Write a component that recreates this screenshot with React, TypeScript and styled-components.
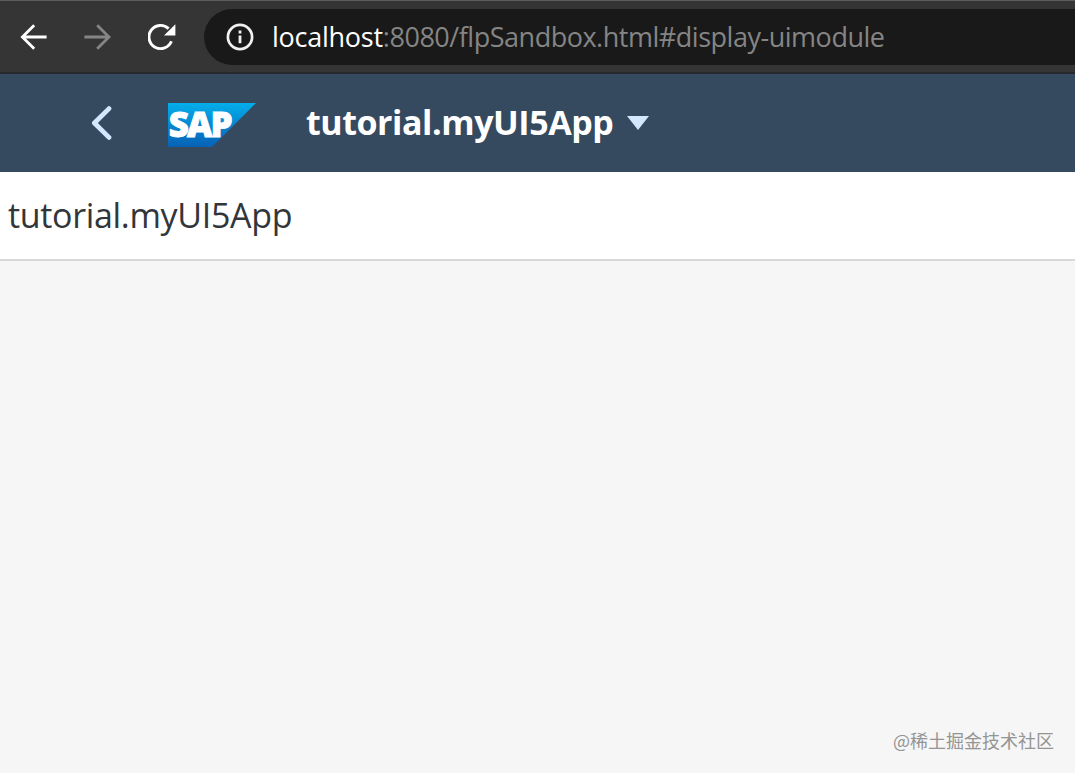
import React from "react";
import styled, { createGlobalStyle } from "styled-components";

const GlobalStyle = createGlobalStyle`
  body {
    margin: 0;
    background-color: #f6f6f6;
    overflow: hidden;
  }
`;

const App: React.FC = () => {
  return (
    <>
      <GlobalStyle />
      <Screen>
        <BrowserBar>
          <NavIcons>
            <svg width="28" height="28" viewBox="0 0 28 28" fill="none" stroke="#fff" strokeWidth="2.8">
              <path d="M26.6 14H3M14.2 2.2L2.4 14l11.8 11.8" />
            </svg>
            <svg width="28" height="28" viewBox="0 0 28 28" fill="none" stroke="#858585" strokeWidth="2.8">
              <path d="M0.4 14h24M13.2 2.2L25 14 13.2 25.8" />
            </svg>
            <svg width="28" height="28" viewBox="0 0 28 28" fill="none">
              <path d="M23.4 18.2A11.6 11.6 0 1 1 20.6 5.6" stroke="#fff" strokeWidth="2.9" />
              <path d="M27.4 1.2v11.2H16z" fill="#fff" />
            </svg>
          </NavIcons>
          <AddressBar>
            <svg width="28" height="28" viewBox="0 0 28 28" fill="none">
              <circle cx="14" cy="14" r="12.1" stroke="#f1f1f1" strokeWidth="2.7" />
              <path d="M12.6 12.6h2.8v7.6h-2.8zM12.6 7.6h2.8v2.8h-2.8z" fill="#f1f1f1" />
            </svg>
            <Url>
              <Host>localhost</Host>:8080/flpSandbox.html#display-uimodule
            </Url>
          </AddressBar>
        </BrowserBar>

        <ShellBar>
          <BackIcon width="20" height="34" viewBox="0 0 20 34">
            <path d="M17 2.6L2.4 17 17 31.4" />
          </BackIcon>
          <Logo width="88" height="44" viewBox="0 0 88 44">
            <defs>
              <linearGradient id="sapBlue" x1="0" y1="0" x2="0" y2="1">
                <stop offset="0" stopColor="#04aeea" />
                <stop offset="0.5" stopColor="#0787d1" />
                <stop offset="1" stopColor="#0761b5" />
              </linearGradient>
            </defs>
            <path d="M0 0h88L44 44H0z" fill="url(#sapBlue)" />
            <LogoText x="0.8" y="34.4">SAP</LogoText>
          </Logo>
          <AppTitle>tutorial.myUI5App</AppTitle>
          <svg width="22" height="14" viewBox="0 0 22 14">
            <path d="M0 0h22L11 14z" fill="#d1e8ff" />
          </svg>
        </ShellBar>

        <PageHeader>
          <PageTitle>tutorial.myUI5App</PageTitle>
        </PageHeader>

        <Content>
          <Watermark>@稀土掘金技术社区</Watermark>
        </Content>
      </Screen>
    </>
  );
};

export default App;

// Styled Components
const Screen = styled.div`
  height: 773px;
  display: flex;
  flex-direction: column;
  overflow: hidden;
`;

const BrowserBar = styled.header`
  box-sizing: border-box;
  height: 74px;
  flex-shrink: 0;
  display: flex;
  align-items: center;
  padding-left: 20px;
  background-color: #353535;
  border-top: 1px solid #5b5d5d;
  border-bottom: 2px solid #26292c;
`;

const NavIcons = styled.nav`
  display: flex;
  gap: 36px;
  width: 184px;
`;

const AddressBar = styled.div`
  box-sizing: border-box;
  flex: 1;
  height: 56px;
  padding-left: 22px;
  display: flex;
  align-items: center;
  gap: 18px;
  background-color: #191919;
  border-radius: 28px 0 0 28px;
`;

const Url = styled.span`
  font-family: "Open Sans", sans-serif;
  font-size: 27px;
  line-height: 40px;
  letter-spacing: -0.48px;
  white-space: nowrap;
  color: #858585;
`;

const Host = styled.span`
  letter-spacing: -0.25px;
  color: #fff;
`;

const ShellBar = styled.div`
  height: 98px;
  flex-shrink: 0;
  display: flex;
  align-items: center;
  padding-left: 92px;
  background-color: #354a5f;
`;

const BackIcon = styled.svg`
  fill: none;
  stroke: #d1e8ff;
  stroke-width: 4.8;
  stroke-linecap: round;
  stroke-linejoin: round;
`;

const Logo = styled.svg`
  margin: 4px 50px 0 56px;
  overflow: visible;
`;

const LogoText = styled.text`
  font-family: "Open Sans", sans-serif;
  font-size: 35px;
  font-weight: 800;
  letter-spacing: -2px;
  fill: #fff;
  stroke: #fff;
  stroke-width: 0.9px;
`;

const AppTitle = styled.span`
  margin: -2px 14px 0 0;
  font-family: "Open Sans", sans-serif;
  font-size: 34px;
  font-weight: 700;
  line-height: 48px;
  letter-spacing: -0.45px;
  color: #fff;
`;

const PageHeader = styled.div`
  box-sizing: border-box;
  height: 89px;
  flex-shrink: 0;
  display: flex;
  align-items: center;
  padding-left: 8px;
  background-color: #fff;
  border-bottom: 2px solid #d9d9d9;
`;

const PageTitle = styled.h1`
  margin: -1px 0 0;
  font-family: "Open Sans", sans-serif;
  font-size: 34px;
  font-weight: 400;
  line-height: 48px;
  letter-spacing: -0.33px;
  color: #32363a;
`;

const Content = styled.main`
  flex: 1;
  display: flex;
  align-items: flex-end;
  justify-content: flex-end;
  padding: 0 21px 20px 0;
`;

const Watermark = styled.span`
  font-family: "Noto Sans CJK SC", sans-serif;
  font-size: 18px;
  line-height: 26px;
  color: #949494;
`;
